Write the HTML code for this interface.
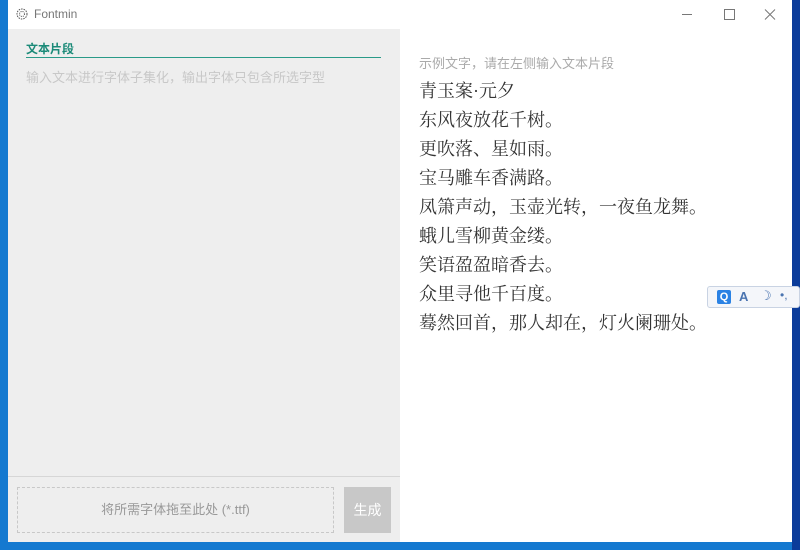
<!DOCTYPE html>
<html><head><meta charset="utf-8"><style>
*{margin:0;padding:0;box-sizing:border-box}
body{width:800px;height:550px;overflow:hidden;background:#1479d0;position:relative;font-family:"Liberation Sans","Noto Sans CJK SC",sans-serif}
.win{position:absolute;left:8px;top:0;width:784px;height:542px;background:#fff}
.rs{position:absolute;left:792px;top:0;width:8px;height:550px;background:#0b3c9a}
.tb{position:absolute;left:0;top:0;width:784px;height:29px;background:#fff}
.tb .t{position:absolute;left:26px;top:7px;font-size:12px;color:#777}
.left{position:absolute;left:0;top:29px;width:392px;height:513px;background:#eeeeee}
.h{position:absolute;left:18px;top:11px;font-size:12px;font-weight:bold;color:#1b8a78}
.ul{position:absolute;left:18px;top:28px;width:355px;height:1px;background:#2a9a88}
.ph{position:absolute;left:18px;top:38px;font-size:13px;color:#c8c8c8}
.sep{position:absolute;left:0;top:447px;width:392px;height:1px;background:#d6d6d6}
.drop{position:absolute;left:9px;top:458px;width:317px;height:46px;border:1px dashed #c8c8c8;font-size:13px;color:#999;text-align:center;line-height:44px}
.btn{position:absolute;left:336px;top:458px;width:47px;height:46px;background:#c8c8c8;color:#fff;font-size:14px;text-align:center;line-height:46px}
.hint{position:absolute;left:411px;top:53px;font-size:13px;color:#aaa}
.poem{position:absolute;left:411px;top:77px;font-family:"Liberation Serif","Noto Serif CJK SC",serif;font-size:18px;line-height:29px;color:#333}
.ime{position:absolute;left:707px;top:286px;width:93px;height:22px;background:#f4f6fa;border:1px solid #c9d3e3;border-radius:3px}
</style></head><body>
<div class="win">
<div class="tb"><svg style="position:absolute;left:8px;top:8px" width="12" height="12"><circle cx="6" cy="6" r="5" fill="none" stroke="#555" stroke-dasharray="1.5 1"/><circle cx="6" cy="6" r="2.5" fill="none" stroke="#555" stroke-dasharray="1 1"/></svg><span class="t">Fontmin</span>
<svg style="position:absolute;left:672px;top:8px" width="100" height="14"><line x1="2" y1="6.5" x2="12" y2="6.5" stroke="#777"/><rect x="44.5" y="1.5" width="10" height="10" fill="none" stroke="#777"/><path d="M85 1.5l10 10M95 1.5l-10 10" stroke="#777"/></svg></div>
<div class="left">
<div class="h">文本片段</div><div class="ul"></div>
<div class="ph">输入文本进行字体子集化，输出字体只包含所选字型</div>
<div class="sep"></div>
<div class="drop">将所需字体拖至此处 (*.ttf)</div>
<div class="btn">生成</div>
</div>
<div class="hint">示例文字，请在左侧输入文本片段</div>
<div class="poem">青玉案·元夕<br>东风夜放花千树。<br>更吹落、星如雨。<br>宝马雕车香满路。<br>凤箫声动，玉壶光转，一夜鱼龙舞。<br>蛾儿雪柳黄金缕。<br>笑语盈盈暗香去。<br>众里寻他千百度。<br>蓦然回首，那人却在，灯火阑珊处。</div>
</div>
<div class="rs"></div>
<div class="ime"><span style="position:absolute;left:9px;top:3px;width:14px;height:14px;background:#2a82e4;border-radius:2px;color:#fff;font-size:11px;font-weight:bold;text-align:center;line-height:14px">Q</span><span style="position:absolute;left:31px;top:2px;font-size:13px;font-weight:bold;color:#4a74b0">A</span><span style="position:absolute;left:52px;top:1px;font-size:13px;color:#4a74b0">☽</span><span style="position:absolute;left:72px;top:1px;font-size:12px;color:#4a74b0">•,</span></div>
</body></html>
